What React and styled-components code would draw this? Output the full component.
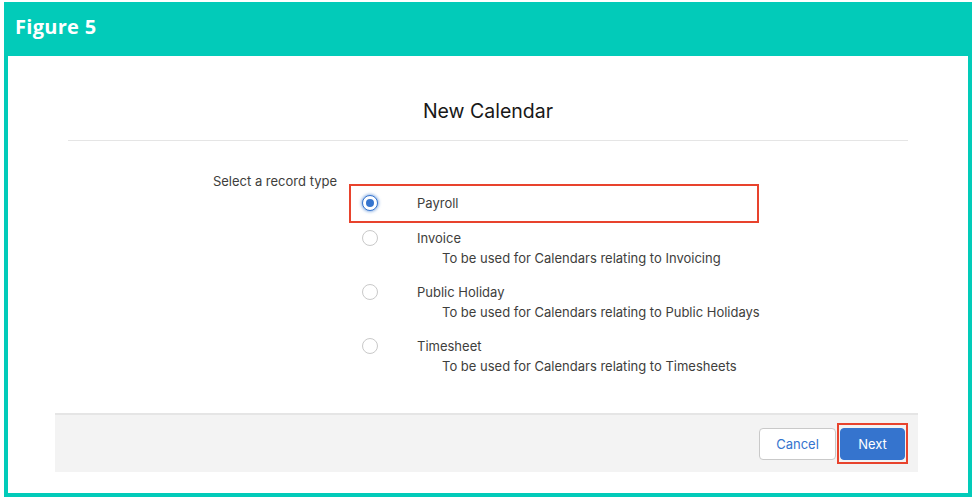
import React from 'react'
import styled, { createGlobalStyle } from 'styled-components'

const teal = '#02cbb9'
const red = '#e8432d'
const blue = '#3574ce'

const GlobalStyle = createGlobalStyle`
  html, body {
    margin: 0;
    padding: 0;
    background: #ffffff;
  }
  body {
    font-family: Inter, "Liberation Sans", Arial, sans-serif;
    color: #3e3e3c;
  }
`

const Page = styled.div`
  width: 976px;
  height: 502px;
  padding: 2px 4px 0 4px;
  box-sizing: border-box;
`

const Frame = styled.div`
  width: 968px;
  height: 495px;
  display: flex;
  flex-direction: column;
`

const FigureBar = styled.div`
  height: 54px;
  box-sizing: border-box;
  background: ${teal};
  color: #ffffff;
  font-family: "Open Sans", Lato, sans-serif;
  font-weight: 700;
  font-size: 20px;
  display: flex;
  align-items: center;
  padding: 0 0 5px 11px;
  letter-spacing: 0.3px;
`

const FigureBody = styled.div`
  flex: 1;
  border: 4px solid ${teal};
  border-top: 0;
  padding: 17px 50px 0 47px;
`

const Modal = styled.div`
  background: #ffffff;
  display: flex;
  flex-direction: column;
`

const ModalHeader = styled.div`
  margin: 0 10px 0 13px;
  padding: 25px 0 16px;
  text-align: center;
  border-bottom: 1px solid #e5e5e5;
`

const Title = styled.h2`
  margin: 0;
  font-size: 19.5px;
  font-weight: 400;
  line-height: 26px;
  color: #181818;
`

const ModalBody = styled.div`
  display: grid;
  grid-template-columns: 285px 1fr;
  padding: 30px 0 35px;
  font-size: 13px;
  line-height: 20px;
`

const FieldLabel = styled.div`
  text-align: right;
  padding-right: 3px;
`

const Options = styled.div`
  display: flex;
  flex-direction: column;
  padding-top: 13px;
  padding-left: 11px;
`

const Option = styled.div`
  display: grid;
  grid-template-columns: 66px 1fr;
  margin: 0 0 ${p => (p.$boxed ? '3px' : '10px')} -2px;
  width: ${p => (p.$boxed ? '410px' : 'auto')};
  box-sizing: border-box;
  border: 2px solid ${p => (p.$boxed ? red : 'transparent')};
  padding: ${p => (p.$boxed ? '7px 0 8px' : '0')};
  &:last-child {
    margin-bottom: 0;
  }
`

const Radio = styled.span`
  width: 16px;
  height: 16px;
  margin: 2px 0 0 11px;
  border-radius: 50%;
  box-sizing: border-box;
  background: #ffffff;
  border: 1px solid ${p => (p.$checked ? blue : '#c9c9c9')};
  box-shadow: ${p => (p.$checked ? '0 0 3px 1px rgba(53, 116, 206, 0.55)' : 'none')};
  display: flex;
  align-items: center;
  justify-content: center;
  &::after {
    content: '';
    display: ${p => (p.$checked ? 'block' : 'none')};
    width: 8px;
    height: 8px;
    border-radius: 50%;
    background: ${blue};
  }
`

const OptionText = styled.div`
  display: flex;
  flex-direction: column;
`

const OptionName = styled.span`
  color: #3e3e3c;
`

const OptionHelp = styled.span`
  padding-left: 25px;
  color: #3e3e3c;
`

const Footer = styled.div`
  background: #f3f3f3;
  border-top: 2px solid #e5e5e5;
  height: 57px;
  padding-right: 10px;
  display: flex;
  align-items: center;
  justify-content: flex-end;
  gap: 1px;
`

const Button = styled.button`
  height: 32px;
  width: ${p => p.$width}px;
  padding: 0;
  border-radius: 4px;
  font-family: inherit;
  font-size: 13px;
  border: 1px solid ${p => (p.$primary ? blue : '#c9c9c9')};
  background: ${p => (p.$primary ? blue : '#ffffff')};
  color: ${p => (p.$primary ? '#ffffff' : blue)};
  cursor: pointer;
`

const Highlight = styled.span`
  display: inline-flex;
  border: 2px solid ${red};
  padding: 3px 1px 2px;
`

const options = [
  { name: 'Payroll', checked: true },
  { name: 'Invoice', help: 'To be used for Calendars relating to Invoicing' },
  { name: 'Public Holiday', help: 'To be used for Calendars relating to Public Holidays' },
  { name: 'Timesheet', help: 'To be used for Calendars relating to Timesheets' },
]

export default function App() {
  return (
    <Page>
      <GlobalStyle />
      <Frame>
        <FigureBar>Figure 5</FigureBar>
        <FigureBody>
          <Modal>
            <ModalHeader>
              <Title>New Calendar</Title>
            </ModalHeader>
            <ModalBody>
              <FieldLabel>Select a record type</FieldLabel>
              <Options>
                {options.map(o => (
                  <Option key={o.name} $boxed={o.checked}>
                    <Radio $checked={o.checked} />
                    <OptionText>
                      <OptionName>{o.name}</OptionName>
                      {o.help && <OptionHelp>{o.help}</OptionHelp>}
                    </OptionText>
                  </Option>
                ))}
              </Options>
            </ModalBody>
            <Footer>
              <Button $width={77}>Cancel</Button>
              <Highlight>
                <Button $primary $width={65}>Next</Button>
              </Highlight>
            </Footer>
          </Modal>
        </FigureBody>
      </Frame>
    </Page>
  )
}
